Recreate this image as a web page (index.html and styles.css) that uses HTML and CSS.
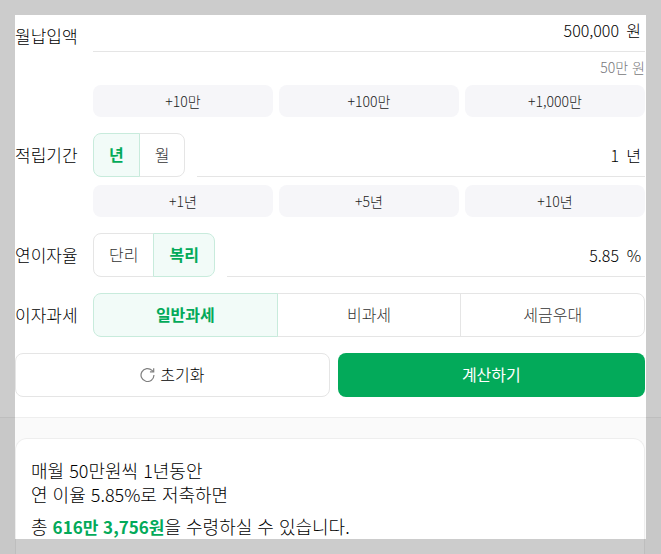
FILE: index.html
```html
<!DOCTYPE html>
<html lang="ko">
<head>
  <meta charset="UTF-8">
  <meta name="viewport" content="width=device-width, initial-scale=1.0">
  <title>적금 계산기</title>
  <link rel="stylesheet" href="styles.css">
</head>
<body>
  <form class="calculator">
    <div class="row row-amount">
      <label class="row-label" for="amount">월납입액</label>
      <div class="row-body">
        <div class="field">
          <input type="text" id="amount" value="500,000" inputmode="numeric">
          <span class="unit">원</span>
        </div>
        <p class="hint">50만 원</p>
        <div class="chips">
          <button type="button">+10만</button>
          <button type="button">+100만</button>
          <button type="button">+1,000만</button>
        </div>
      </div>
    </div>

    <div class="row">
      <label class="row-label" for="period">적립기간</label>
      <div class="row-body">
        <div class="line">
          <div class="segment">
            <label><input type="radio" name="periodUnit" checked><span>년</span></label>
            <label><input type="radio" name="periodUnit"><span>월</span></label>
          </div>
          <div class="field">
            <input type="text" id="period" value="1" inputmode="numeric">
            <span class="unit">년</span>
          </div>
        </div>
        <div class="chips">
          <button type="button">+1년</button>
          <button type="button">+5년</button>
          <button type="button">+10년</button>
        </div>
      </div>
    </div>

    <div class="row">
      <label class="row-label" for="rate">연이자율</label>
      <div class="row-body">
        <div class="line">
          <div class="segment">
            <label><input type="radio" name="interest"><span>단리</span></label>
            <label><input type="radio" name="interest" checked><span>복리</span></label>
          </div>
          <div class="field">
            <input type="text" id="rate" value="5.85" inputmode="decimal">
            <span class="unit">%</span>
          </div>
        </div>
      </div>
    </div>

    <div class="row" role="radiogroup" aria-labelledby="taxLabel">
      <span class="row-label" id="taxLabel">이자과세</span>
      <div class="row-body">
        <div class="segment segment-wide">
          <label><input type="radio" name="tax" checked><span>일반과세</span></label>
          <label><input type="radio" name="tax"><span>비과세</span></label>
          <label><input type="radio" name="tax"><span>세금우대</span></label>
        </div>
      </div>
    </div>

    <div class="actions">
      <button type="reset" class="reset-btn">
        <svg width="16" height="16" viewBox="0 0 16 16" fill="none" stroke="#808080" stroke-width="1.3" aria-hidden="true">
          <path d="M14.9 8.6A6.9 6.9 0 1 1 12.8 3.6L14.2 5"/>
          <path d="M14.6 1.2V5.2H10.6"/>
        </svg>
        초기화
      </button>
      <button type="button" class="submit-btn">계산하기</button>
    </div>
  </form>

  <section class="result">
    <div class="result-card">
      <p>매월 50만원씩 1년동안<br>연 이율 5.85%로 저축하면</p>
      <p class="total">총 <strong>616만 3,756원</strong>을 수령하실 수 있습니다.</p>
    </div>
  </section>

  <div class="frame"></div>
</body>
</html>
```
FILE: styles.css
```css
* {
  box-sizing: border-box;
}

body {
  margin: 0;
  min-height: 100vh;
  display: flex;
  flex-direction: column;
  background: #fff;
  color: #000;
  font-family: "Noto Sans CJK KR", sans-serif;
  font-size: 16px;
  font-weight: 300;
  line-height: 24px;
}

p {
  margin: 0;
}

button,
input {
  font: inherit;
  color: inherit;
}

button {
  cursor: pointer;
}

.calculator {
  display: flex;
  flex-direction: column;
  gap: 16px;
  padding: 8px 16px 20px 15px;
}

.row {
  display: flex;
  gap: 16px;
}

.row-label {
  flex: none;
  width: 62px;
  font-size: 17px;
  line-height: 44px;
  white-space: nowrap;
}

.row-amount .row-label {
  line-height: 56px;
}

.row-body {
  flex: 1;
  min-width: 0;
}

.line {
  display: flex;
  gap: 12px;
}

/* Number input with its unit */
.field {
  flex: 1;
  min-width: 0;
  height: 44px;
  display: flex;
  align-items: center;
  gap: 6px;
  padding-right: 4px;
  border-bottom: 1px solid #e5e5e5;
}

.field input {
  flex: 1;
  min-width: 0;
  padding: 0;
  border: 0;
  outline: 0;
  background: none;
  text-align: right;
}

.unit {
  min-width: 16px;
  text-align: right;
}

.hint {
  margin: 5px 0 8px;
  color: #77777a;
  font-size: 14px;
  line-height: 20px;
  text-align: right;
}

.chips {
  display: grid;
  grid-template-columns: repeat(3, 1fr);
  gap: 6px;
}

.line + .chips {
  margin-top: 8px;
}

.chips button {
  height: 32px;
  padding: 0;
  border: 0;
  border-radius: 8px;
  background: #f6f6f9;
  color: #222;
  font-size: 14px;
  line-height: 20px;
}

/* Segmented radio buttons */
.segment {
  display: flex;
}

.segment label {
  display: flex;
  cursor: pointer;
}

.segment label + label {
  margin-left: -1px;
}

.segment input {
  appearance: none;
  width: 0;
  height: 0;
  margin: 0;
}

.segment span {
  flex: 1;
  padding: 8px 15px 10px;
  border: 1px solid #e5e5e5;
  color: #333;
  text-align: center;
}

.segment label:first-child span {
  border-radius: 8px 0 0 8px;
}

.segment label:last-child span {
  border-radius: 0 8px 8px 0;
}

.segment input:checked + span {
  z-index: 1;
  border-color: #c8ebdc;
  background: #f2fbf8;
  color: #03aa5a;
  font-weight: 700;
}

.segment-wide label {
  flex: 1;
}

.actions {
  display: flex;
  gap: 8px;
}

.actions button {
  flex: 1 1 auto;
  height: 44px;
  display: flex;
  align-items: center;
  justify-content: center;
  gap: 5px;
  padding: 0 0 2px;
  border-radius: 8px;
}

.reset-btn {
  border: 1px solid #e5e5e5;
  background: #fff;
}

.reset-btn svg {
  width: 15px;
  height: 15px;
}

.submit-btn {
  border: 0;
  background: #03aa5a;
  color: #fff;
  font-weight: 400;
}

.result {
  flex: 1;
  display: flex;
  padding: 20px 16px 0 15px;
  border-top: 1px solid #eee;
  background: #fafafa;
}

.result-card {
  flex: 1;
  padding: 19px 15px 0;
  border: 1px solid #eee;
  border-bottom: 0;
  border-radius: 12px 12px 0 0;
  background: #fff;
  font-size: 18px;
}

.total {
  margin-top: 8px;
}

.total strong {
  color: #03aa5a;
  font-size: 17px;
  font-weight: 700;
}

/* Dimmed edge over the page */
.frame {
  position: fixed;
  inset: 0;
  border: 15px solid rgba(0, 0, 0, 0.2);
  pointer-events: none;
}
```
